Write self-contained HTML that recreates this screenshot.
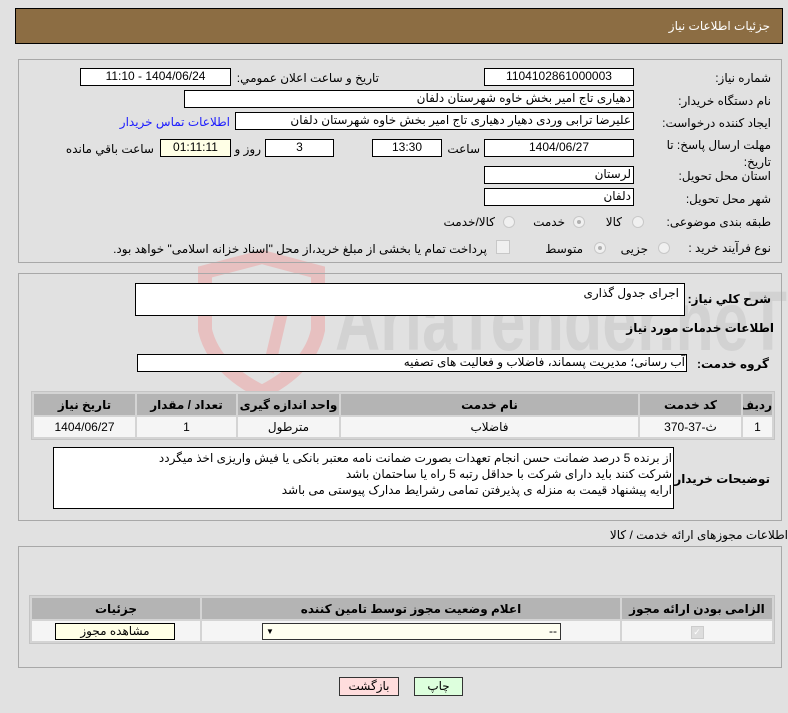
<!DOCTYPE html>
<html><head><meta charset="utf-8"><style>
body{margin:0;width:788px;height:713px;background:#e1e1e1;position:relative;overflow:hidden;font-family:"Liberation Sans","DejaVu Sans",sans-serif;font-size:12px;color:#000}
.a{position:absolute;white-space:nowrap;direction:rtl}
.b{position:absolute;background:#fff;border:1px solid #000;box-sizing:border-box;direction:rtl;font-size:12px;line-height:15px;white-space:nowrap;overflow:hidden;padding:0 2px}
.c{text-align:center}
.p{position:absolute;border:1px solid #a8a8a8;box-sizing:border-box}
.r{position:absolute;width:12px;height:12px;border-radius:50%;border:1px solid #c8c8c8;background:#f0f0f0;box-sizing:border-box}
.r.on::after{content:"";position:absolute;left:3px;top:3px;width:4px;height:4px;border-radius:50%;background:#b0b0b0}
table{position:absolute;border-collapse:separate;border-spacing:2px;background:#d4d4d4;border:1px solid #c4c4c4;direction:rtl;table-layout:fixed}
th{background:#b4b4b4;font-weight:bold;font-size:12px;height:21px;padding:0;white-space:nowrap;overflow:hidden}
td{background:#f5f5f5;text-align:center;height:20px;padding:0;font-size:12px;white-space:nowrap}
.bl{font-weight:bold;font-size:12px}
</style></head><body>
<svg style="position:absolute;left:0;top:0" width="788" height="713">
<path d="M205 272 L262 257 L318 272 L318 330 Q310 368 262 392 Q214 368 205 330 Z" fill="none" stroke="#e9b8b8" stroke-width="14" opacity="0.8"/>
<path d="M240 305 L285 292 L295 305 L282 312 L268 372" fill="none" stroke="#e9b8b8" stroke-width="12" opacity="0.8"/>
<text x="335" y="350" font-family="Liberation Sans" font-size="84" font-weight="bold" fill="#d2d2d2" textLength="452" lengthAdjust="spacingAndGlyphs">AriaTender.neT</text>
</svg>
<div style="position:absolute;left:15px;top:8px;width:768px;height:36px;background:#8c6d43;border:1px solid #000;box-sizing:border-box"></div>
<div class="a" style="right:18px;top:19px;color:#fff">جزئیات اطلاعات نیاز</div>

<div class="p" style="left:18px;top:59px;width:764px;height:204px"></div>
<div class="a" style="right:17px;top:71px">شماره نیاز:</div>
<div class="b c" style="left:484px;top:68px;width:150px;height:18px">1104102861000003</div>
<div class="a" style="right:409px;top:71px">تاریخ و ساعت اعلان عمومي:</div>
<div class="b c" style="left:80px;top:68px;width:151px;height:18px">1404/06/24 - 11:10</div>
<div class="a" style="right:17px;top:94px">نام دستگاه خریدار:</div>
<div class="b" style="left:184px;top:90px;width:450px;height:18px">دهیاری تاج امیر بخش خاوه شهرستان دلفان</div>
<div class="a" style="right:17px;top:116px">ایجاد کننده درخواست:</div>
<div class="b" style="left:235px;top:112px;width:399px;height:18px">علیرضا ترابی وردی دهیار دهیاری تاج امیر بخش خاوه شهرستان دلفان</div>
<div class="a" style="right:558px;top:115px;color:#1a1aff">اطلاعات تماس خریدار</div>
<div class="a" style="right:17px;top:137px;line-height:17px;text-align:right">مهلت ارسال پاسخ: تا<br>تاریخ:</div>
<div class="b c" style="left:484px;top:139px;width:150px;height:18px">1404/06/27</div>
<div class="a" style="right:308px;top:142px">ساعت</div>
<div class="b c" style="left:372px;top:139px;width:70px;height:18px">13:30</div>
<div class="b c" style="left:265px;top:139px;width:69px;height:18px">3</div>
<div class="a" style="right:527px;top:142px">روز و</div>
<div class="b c" style="left:160px;top:139px;width:71px;height:18px;background:#ffffe6">01:11:11</div>
<div class="a" style="right:634px;top:142px">ساعت باقي مانده</div>
<div class="a" style="right:17px;top:169px">استان محل تحویل:</div>
<div class="b" style="left:484px;top:166px;width:150px;height:18px">لرستان</div>
<div class="a" style="right:17px;top:192px">شهر محل تحویل:</div>
<div class="b" style="left:484px;top:188px;width:150px;height:18px">دلفان</div>
<div class="a" style="right:17px;top:215px">طبقه بندی موضوعی:</div>
<div class="r" style="left:632px;top:216px"></div><div class="a" style="right:166px;top:215px">کالا</div>
<div class="r on" style="left:573px;top:216px"></div><div class="a" style="right:223px;top:215px">خدمت</div>
<div class="r" style="left:503px;top:216px"></div><div class="a" style="right:293px;top:215px">کالا/خدمت</div>
<div class="a" style="right:17px;top:241px">نوع فرآیند خرید :</div>
<div class="r" style="left:658px;top:242px"></div><div class="a" style="right:140px;top:242px">جزیی</div>
<div class="r on" style="left:594px;top:242px"></div><div class="a" style="right:205px;top:242px">متوسط</div>
<div style="position:absolute;left:496px;top:240px;width:12px;height:12px;border:1px solid #c8c8c8;background:#f0f0f0"></div>
<div class="a" style="right:301px;top:242px">پرداخت تمام یا بخشی از مبلغ خرید،از محل "اسناد خزانه اسلامی" خواهد بود.</div>

<div class="p" style="left:18px;top:273px;width:764px;height:248px"></div>
<div class="a bl" style="right:17px;top:292px">شرح کلي نیاز:</div>
<div class="b" style="left:135px;top:283px;width:550px;height:33px;padding:2px 5px">اجرای جدول گذاری</div>
<div class="a bl" style="right:14px;top:321px">اطلاعات خدمات مورد نیاز</div>
<div class="a bl" style="right:19px;top:357px">گروه خدمت:</div>
<div class="b" style="left:137px;top:354px;width:550px;height:18px;padding:0 1px">آب رسانی؛ مدیریت پسماند، فاضلاب و فعالیت های تصفیه</div>
<table style="left:31px;top:391px;width:744px">
<colgroup><col style="width:29px"><col style="width:101px"><col><col style="width:101px"><col style="width:99px"><col style="width:101px"></colgroup>
<tr><th>ردیف</th><th>کد خدمت</th><th>نام خدمت</th><th>واحد اندازه گیری</th><th>تعداد / مقدار</th><th>تاریخ نیاز</th></tr>
<tr><td>1</td><td>ث-37-370</td><td>فاضلاب</td><td>مترطول</td><td>1</td><td>1404/06/27</td></tr>
</table>
<div class="a bl" style="right:18px;top:472px">توضیحات خریدار:</div>
<div class="b" style="left:53px;top:447px;width:621px;height:62px;padding:2px 1px;line-height:16px">از برنده 5 درصد ضمانت حسن انجام تعهدات بصورت ضمانت نامه معتبر بانکی یا فیش واریزی اخذ میگردد<br>شرکت کنند باید دارای شرکت با حداقل رتبه 5 راه یا ساحتمان باشد<br>ارایه پیشنهاد قیمت به منزله ی پذیرفتن تمامی رشرایط مدارک پیوستی می باشد</div>

<div class="a" style="right:0px;top:528px">اطلاعات مجوزهای ارائه خدمت / کالا</div>
<div class="p" style="left:18px;top:546px;width:764px;height:122px"></div>
<table style="left:29px;top:595px;width:746px">
<colgroup><col style="width:150px"><col><col style="width:168px"></colgroup>
<tr><th>الزامی بودن ارائه مجوز</th><th>اعلام وضعیت مجوز توسط تامین کننده</th><th>جزئیات</th></tr>
<tr><td><span style="display:inline-block;width:11px;height:11px;background:#ddd;border:1px solid #ccc;color:#fff;font-size:9px;line-height:11px">✓</span></td><td><div style="margin-right:59px;width:299px;height:17px;border:1px solid #333;background:#fffff0;box-sizing:border-box;display:flex;justify-content:space-between;align-items:center;padding:0 3px;direction:ltr"><span style="font-size:8px">▼</span><span>--</span></div></td><td><div style="margin-right:25px;width:120px;height:17px;border:1px solid #000;background:#ffffe6;box-sizing:border-box;line-height:15px">مشاهده مجوز</div></td></tr>
</table>
<div style="position:absolute;left:339px;top:677px;width:60px;height:19px;border:1px solid #333;background:#fdd;box-sizing:border-box;text-align:center;line-height:17px">بازگشت</div>
<div style="position:absolute;left:414px;top:677px;width:49px;height:19px;border:1px solid #333;background:#dfd;box-sizing:border-box;text-align:center;line-height:17px">چاپ</div>
</body></html>
